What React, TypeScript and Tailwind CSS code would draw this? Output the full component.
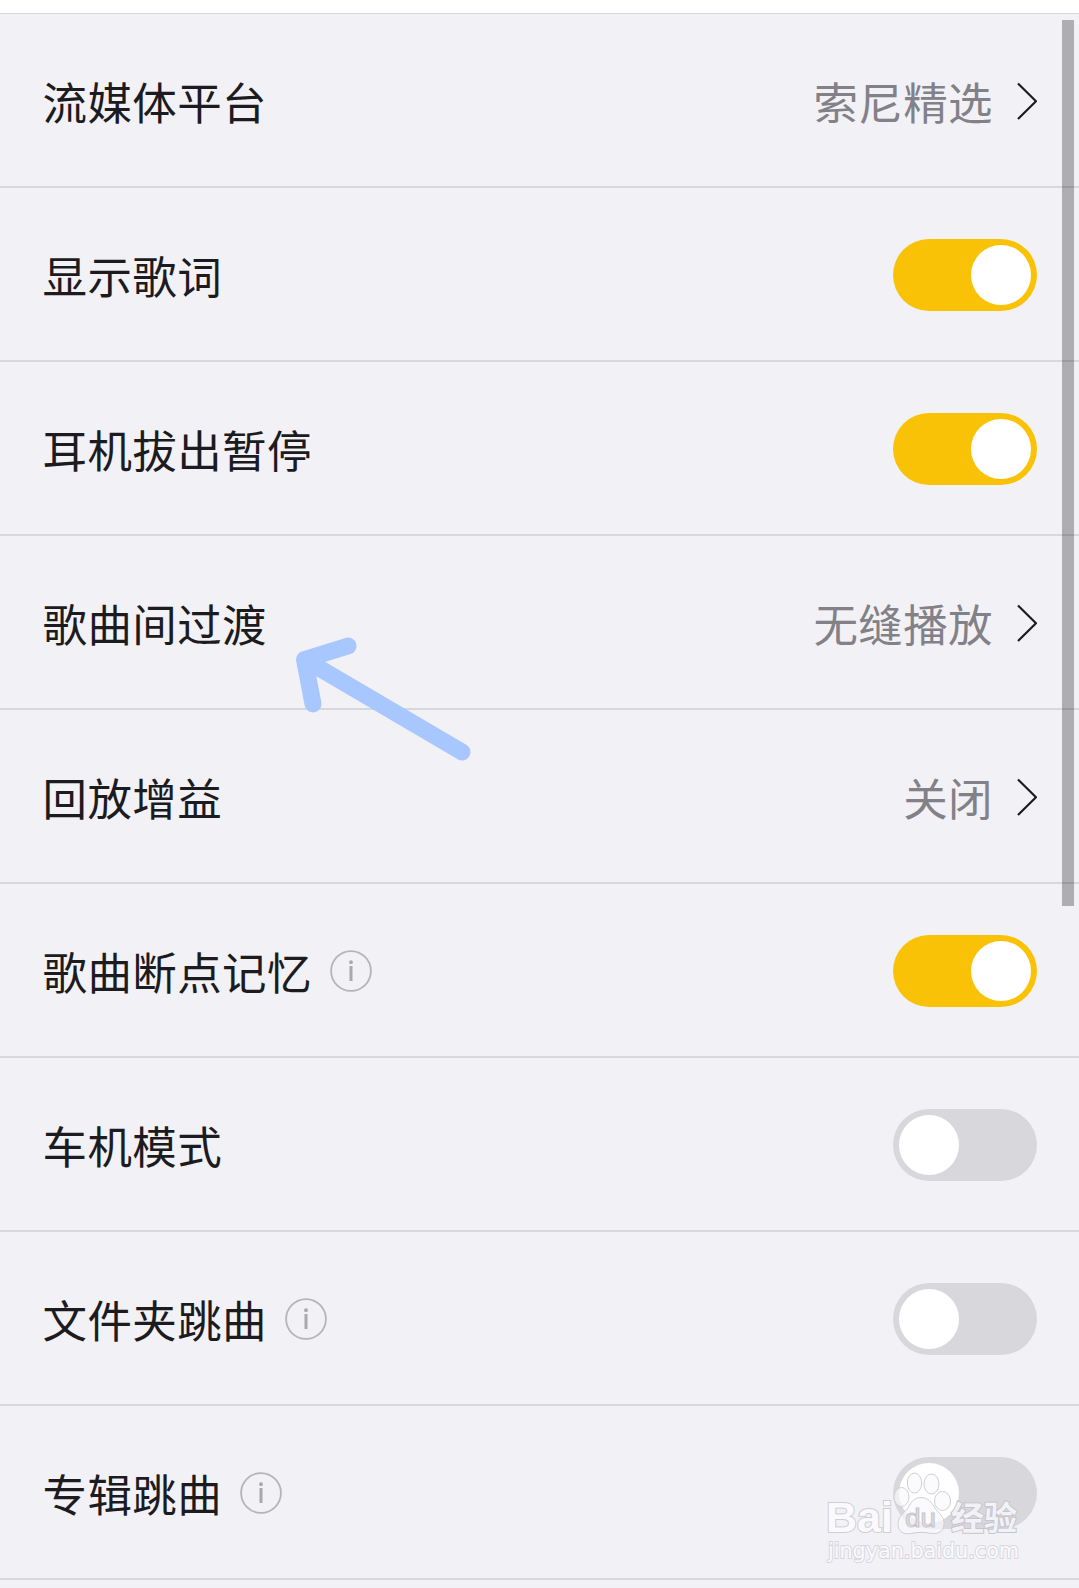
type SettingRow = {
  label: string;
  info?: boolean;
  value?: string;
  enabled?: boolean;
};

const SETTINGS: SettingRow[] = [
  { label: "流媒体平台", value: "索尼精选" },
  { label: "显示歌词", enabled: true },
  { label: "耳机拔出暂停", enabled: true },
  { label: "歌曲间过渡", value: "无缝播放" },
  { label: "回放增益", value: "关闭" },
  { label: "歌曲断点记忆", info: true, enabled: true },
  { label: "车机模式", enabled: false },
  { label: "文件夹跳曲", info: true, enabled: false },
  { label: "专辑跳曲", info: true, enabled: false },
];

function Toggle({ enabled }: { enabled?: boolean }) {
  return (
    <button
      type="button"
      role="switch"
      aria-checked={enabled}
      className={`flex h-[72px] w-36 items-center rounded-full p-1.5 ${
        enabled ? "justify-end bg-[#f9c206]" : "justify-start bg-[#d8d7dc]"
      }`}
    >
      <span className="size-[60px] rounded-full bg-white" />
    </button>
  );
}

function InfoIcon() {
  return (
    <svg className="ml-[18px] size-[42px]" viewBox="0 0 42 42" fill="none">
      <circle cx="21" cy="21" r="19.900" stroke="#b5b4b9" strokeWidth="1.8" />
      <circle cx="21" cy="12.200" r="1.900" fill="#a9a8ad" />
      <path d="M21 16V31" stroke="#a9a8ad" strokeWidth="3" />
    </svg>
  );
}

function Chevron() {
  return (
    <svg className="h-[38px] w-[21px]" viewBox="0 0 21 38" fill="none">
      <path d="M2 1.500L20 19.200L2 37" stroke="#1c1b20" strokeWidth="2.200" />
    </svg>
  );
}

function Row({ label, info, value, enabled }: SettingRow) {
  return (
    <div className="flex h-[174px] items-center justify-between border-b-2 border-[#d8d7dc] pt-0.5 pr-[42px] pl-[42.5px]">
      <div className="flex items-center">
        <span className="text-[44.5px] leading-[44px] tracking-[0.4px] text-[#1c1b20]">{label}</span>
        {info && <InfoIcon />}
      </div>
      {value ? (
        <div className="flex items-center gap-[23px]">
          <span className="text-[44.5px] leading-[44px] tracking-[0.4px] text-[#828187]">{value}</span>
          <Chevron />
        </div>
      ) : (
        <Toggle enabled={enabled} />
      )}
    </div>
  );
}

function Arrow() {
  return (
    <svg
      className="absolute top-[630px] left-[290px] h-[140px] w-[190px]"
      viewBox="290 630 190 140"
      fill="none"
      stroke="#a9c7ff"
      strokeWidth="17"
      strokeLinecap="round"
      strokeLinejoin="round"
    >
      <path d="M462 752L304.500 659.500M348 646L304.500 659.500L313 704" />
    </svg>
  );
}

function Watermark() {
  return (
    <svg
      className="absolute top-[1460px] left-[820px] h-[110px] w-[210px]"
      viewBox="820 1460 210 110"
      fill="#fafafc"
      stroke="#cfced3"
      strokeWidth="1"
    >
      <g paintOrder="stroke" strokeWidth="2">
        <text
          x="826"
          y="1532"
          fontSize="42"
          fontWeight="700"
          fontFamily="Liberation Sans, sans-serif"
          textLength="67"
          lengthAdjust="spacingAndGlyphs"
        >
          Bai
        </text>
        <text
          x="951"
          y="1530"
          fontSize="33"
          fontWeight="700"
          fontFamily="Noto Sans CJK SC, sans-serif"
          fill="#f2f1f6"
          stroke="#c6c5ca"
        >
          经验
        </text>
        <text
          x="828"
          y="1558"
          fontSize="21"
          fontFamily="DejaVu Sans, sans-serif"
          textLength="191"
          lengthAdjust="spacingAndGlyphs"
          stroke="#d8d7dc"
        >
          jingyan.baidu.com
        </text>
      </g>
      <g fillOpacity="0.7">
        <ellipse cx="901.500" cy="1497" rx="7.500" ry="9.500" />
        <ellipse cx="914.500" cy="1483" rx="7.200" ry="10" />
        <ellipse cx="931.500" cy="1484" rx="7.500" ry="10" />
        <ellipse cx="942.500" cy="1501" rx="8" ry="9.500" />
        <path d="M921 1497.500C928 1497.500 932 1503 935 1508C939 1514 945 1517 944 1525C943 1532 938 1534 932 1533.500C924 1532 918 1532 911 1533.500C903 1535 898 1531 898 1524C898 1516 904 1513 908 1508C911 1502 914 1497.500 921 1497.500Z" />
      </g>
      <text
        x="905"
        y="1527"
        fontSize="25"
        fontFamily="Liberation Sans, sans-serif"
        textLength="31"
        lengthAdjust="spacingAndGlyphs"
        fill="#e2e1e5"
        stroke="#c6c5ca"
      >
        du
      </text>
    </svg>
  );
}

export default function App() {
  return (
    <main className="relative h-[1588px] w-[1079px] overflow-hidden bg-[#f2f1f6] pt-[13px] font-['Noto_Sans_CJK_SC',sans-serif] before:absolute before:inset-x-0 before:top-0 before:h-[13px] before:bg-white">
      <section className="border-t border-[#d8d8da]">
        {SETTINGS.map((item) => (
          <Row key={item.label} {...item} />
        ))}
      </section>
      <div className="absolute top-5 right-[5px] h-[886px] w-3 bg-black/28" />
      <Arrow />
      <Watermark />
    </main>
  );
}
